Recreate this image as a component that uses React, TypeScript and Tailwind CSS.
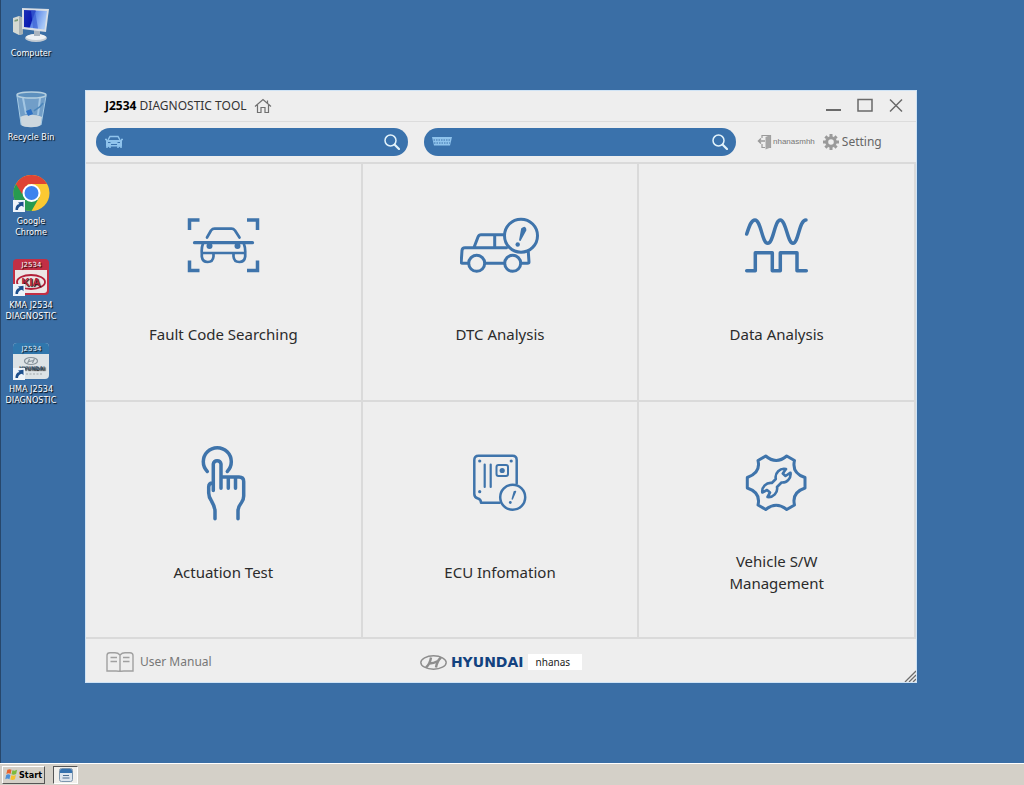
import type { ReactNode } from "react";

const LINE = "#3f74ab";

function Shortcut() {
  return (
    <g>
      <rect x="1" y="26" width="12" height="12" fill="#eef4fa" />
      <path d="M3.500 36c0-4 1.500-5.500 4-6L6 28.500l5.500-.8v5.500l-1.500-1.500c-2.500.6-4 2-4 4.300z" fill="#1d4f8c" />
    </g>
  );
}

function ComputerIcon() {
  return (
    <svg viewBox="0 0 38 38" className="h-[38px] w-[38px]" aria-hidden="true">
      <defs>
        <linearGradient id="screen" x1="0" x2="1" y1="0" y2="0.3">
          <stop offset="0" stopColor="#1a2fb8" />
          <stop offset="0.45" stopColor="#0a18b0" />
          <stop offset="0.5" stopColor="#5b86e8" />
          <stop offset="1" stopColor="#a8c8f6" />
        </linearGradient>
      </defs>
      <path d="M1 12l6-2 4 2v16l-4 1-6-3z" fill="#d5d9d3" />
      <path d="M7 10l4 2v16l-4 1z" fill="#a9b2b4" />
      <path d="M2.500 14l3.500-1v2l-3.500.8z" fill="#7d9c7c" />
      <ellipse cx="24" cy="32" rx="11" ry="4" fill="#c3cbd3" />
      <ellipse cx="24" cy="31" rx="10" ry="3" fill="#eef1f4" />
      <path d="M22 24h6v6h-6z" fill="#aab4bf" />
      <path d="M10 2l27 1-3 23-24-3z" fill="#d9dee4" />
      <path d="M12 4l23 1-2.500 18.500L12 21z" fill="url(#screen)" />
      <path d="M19 4.300l4 .2 3 18-5-.6z" fill="#3c62d4" opacity=".7" />
    </svg>
  );
}

function RecycleIcon() {
  return (
    <svg viewBox="0 0 38 38" className="h-[38px] w-[38px]" aria-hidden="true">
      <path d="M5 5l4 30c3 3 17 3 20 0L34 5z" fill="#8fb8da" opacity=".65" />
      <path d="M8 27l1.200 8c3 3 16.600 3 19.600 0L30 27c-6-3-16-3-22 0z" fill="#d7dde0" opacity=".9" />
      <path d="M11 8l3 16M28 8l-2 17" stroke="#b9d8ef" strokeWidth="2" opacity=".7" />
      <path d="M31 13c-3 5-7 6-9 8" stroke="#4c86bb" strokeWidth="1.500" fill="none" />
      <path d="M14 21l5-2 2 5-5 2z" fill="#2f71c4" />
      <ellipse cx="19.500" cy="5" rx="14.500" ry="3" fill="#5d90be" stroke="#b5cfdf" strokeWidth="1.500" />
      <path d="M5 6l4.200 29M34 6l-5 29" stroke="#a5cbe5" strokeWidth="1" />
    </svg>
  );
}

function ChromeLogo() {
  return (
    <svg viewBox="0 0 38 38" className="h-[38px] w-[38px]" aria-hidden="true">
      <circle cx="19.500" cy="19" r="18" fill="#fbc932" />
      <path d="M3.900 10a18 18 0 0 0 15.600 27l8-14-8-4z" fill="#279b50" />
      <path d="M3.900 10L10 20l6-10h19.100a18 18 0 0 0-31.200 0z" fill="#de4334" />
      <circle cx="19.500" cy="19" r="9" fill="#fff" />
      <circle cx="19.500" cy="19" r="7" fill="#3c83ee" />
      <Shortcut />
    </svg>
  );
}

function KiaIcon() {
  return (
    <svg viewBox="0 0 38 38" className="h-[38px] w-[38px]" aria-hidden="true">
      <rect x="1" y="1" width="36" height="36" rx="4" fill="#c22f45" />
      <path d="M3 12H35V32Q35 35 32 35H6Q3 35 3 32Z" fill="#ece6e6" />
      <text x="19.500" y="9" textAnchor="middle" fontSize="7" fill="#fff" className="font-['DejaVu_Sans']">J2534</text>
      <ellipse cx="19" cy="24" rx="14" ry="7" fill="none" stroke="#b3203a" strokeWidth="1.800" />
      <text x="19" y="28" textAnchor="middle" fontSize="11" fontWeight="bold" fill="#b3203a" className="font-['Liberation_Sans']">KIA</text>
      <Shortcut />
    </svg>
  );
}

function HyundaiIcon() {
  return (
    <svg viewBox="0 0 38 38" className="h-[38px] w-[38px]" aria-hidden="true">
      <rect x="1" y="1" width="36" height="36" rx="4" fill="#dde3e6" />
      <path d="M1 12V5a4 4 0 0 1 4-4h28a4 4 0 0 1 4 4v7z" fill="#3077ad" />
      <text x="19.500" y="9" textAnchor="middle" fontSize="7" fill="#e7f3fb" className="font-['DejaVu_Sans']">J2534</text>
      <ellipse cx="19" cy="19" rx="6.500" ry="3.500" fill="none" stroke="#87939b" strokeWidth="1.200" />
      <path d="M15.500 21.500l2-4.500M20.500 21l2-4.500M17 19.500l4.500-1" stroke="#87939b" strokeWidth="1.200" />
      <text x="20" y="28" textAnchor="middle" fontSize="5" fontWeight="bold" fill="#3b566d" className="font-['DejaVu_Sans']">HYUNDAI</text>
      <path d="M14 32h17" stroke="#b4bcc0" strokeWidth="1.500" strokeDasharray="2 1.500" />
      <Shortcut />
    </svg>
  );
}

const shortcuts: { label: string[]; icon: ReactNode }[] = [
  { label: ["Computer"], icon: <ComputerIcon /> },
  { label: ["Recycle Bin"], icon: <RecycleIcon /> },
  { label: ["Google", "Chrome"], icon: <ChromeLogo /> },
  { label: ["KMA J2534", "DIAGNOSTIC"], icon: <KiaIcon /> },
  { label: ["HMA J2534", "DIAGNOSTIC"], icon: <HyundaiIcon /> },
];

function TileIcon({ children, width = 3.5 }: { children: ReactNode; width?: number }) {
  return (
    <svg viewBox="0 0 80 80" className="h-20 w-20" fill="none" stroke={LINE} strokeWidth={width} strokeLinecap="round" strokeLinejoin="round" aria-hidden="true">
      {children}
    </svg>
  );
}

const tiles: { label: string[]; icon: ReactNode }[] = [
  {
    label: ["Fault Code Searching"],
    icon: (
      <TileIcon width={2.7}>
        <path d="M6.500 25V15H16.500M64 15H74.500V25M6.500 55.500V65.500H16.500M64 65.500H74.500V55.500" strokeWidth="3.500" strokeLinecap="butt" strokeLinejoin="miter" />
        <path d="M11.500 37.700H69.500" strokeWidth="3.200" />
        <path d="M24 32.500L28 25.500Q29.500 23.700 31.500 23.700H48.500Q50.500 23.700 52 25.500L56.500 32.500" />
        <path d="M20 38.500Q18.300 43 18.800 48V51.500Q19.500 57 24.700 57Q30 57 30.500 51.500V48H50.500V51.500Q51 57 56.300 57Q61.500 57 62.200 51.500V48Q62.500 43 60.800 38.500M19 48H62" />
        <circle cx="26.500" cy="41" r="3" fill={LINE} stroke="none" />
        <circle cx="54.500" cy="41" r="3" fill={LINE} stroke="none" />
      </TileIcon>
    ),
  },
  {
    label: ["DTC Analysis"],
    icon: (
      <TileIcon width={3}>
        <path d="M8 58.300H2.500Q1.200 58.300 1.200 57L2 45.500Q2.300 42.700 5 42.700H46.500M14 42.500L18 32Q19 29.700 21 29.700H43.500M34.700 30V42.500M25.300 58.300H44M61.300 58.300H67.500Q69 58.300 69 57L68.300 47" />
        <circle cx="16.700" cy="58.300" r="8" />
        <circle cx="52.700" cy="58.300" r="8" />
        <circle cx="61" cy="30.700" r="16.500" />
        <path d="M62 24Q65.500 21 65.500 25L60 35Z" fill={LINE} strokeWidth="1.800" />
        <circle cx="57.700" cy="39.500" r="2.200" fill={LINE} stroke="none" />
      </TileIcon>
    ),
  },
  {
    label: ["Data Analysis"],
    icon: (
      <TileIcon>
        <path d="M9.700 29C12 22 14 15 18 15C24 15 25 38.300 30.700 38.300C36.500 38.300 37.500 15 43.300 15C49 15 50.500 38.300 56 38.300C61.500 38.300 62 15 69 15" />
        <path d="M9.700 65.700H18.300V47.700H35.300V65.700H43.300V47.700H60V65.700H69.300" />
      </TileIcon>
    ),
  },
  {
    label: ["Actuation Test"],
    icon: (
      <TileIcon>
        <path d="M24.300 28.500A14 14 0 1 1 44.300 28.500" />
        <path d="M30.300 47.500V21A3.900 3.900 0 0 1 38 21V45.300M38 34H56Q60.700 34 60.700 38.500V53Q60.700 56.500 58.500 59.500Q55 64 55 68V75.700M45.300 34V45.300M52.500 34V45.300M29.500 40Q25.700 40 25.700 44V50Q25.700 54 28.500 58Q32 64 32 68V75.700" />
      </TileIcon>
    ),
  },
  {
    label: ["ECU Infomation"],
    icon: (
      <TileIcon width={2.5}>
        <path d="M56.700 40.500V17Q56.700 12.700 52.500 12.700H18.500Q14.300 12.700 14.300 17V51Q14.300 54.500 18 55.500Q21 56.500 21 59.700H39.500" />
        <path d="M24.700 21.500V44M30.700 21.500V44" strokeWidth="2.200" />
        <rect x="36.500" y="22" width="11.500" height="11" rx="2" strokeWidth="2" />
        <circle cx="42.200" cy="27.500" r="2.600" fill={LINE} stroke="none" />
        <circle cx="19.700" cy="18" r="1.600" fill={LINE} stroke="none" />
        <circle cx="51.200" cy="18" r="1.600" fill={LINE} stroke="none" />
        <circle cx="19.700" cy="48.700" r="1.600" fill={LINE} stroke="none" />
        <circle cx="52.700" cy="54.300" r="12.500" />
        <path d="M54.300 48.700L55.500 48.500L52.300 56Z" fill={LINE} strokeWidth="1.500" />
        <circle cx="50.300" cy="59.500" r="1.400" fill={LINE} stroke="none" />
      </TileIcon>
    ),
  },
  {
    label: ["Vehicle S/W", "Management"],
    icon: (
      <TileIcon width={3}>
        <path d="M28.700 13Q39.200 22 49.700 13L57.500 17.500Q54.500 30 68 34.500V45Q54.500 49.500 57.500 62L49.700 66.500Q39.200 58 28.700 66.500L21 62Q24 49.500 10.300 45V34.500Q24 30 21 17.500Z" />
        <path d="M49 26A8.500 8.500 0 0 0 38.800 36L34.800 40A8.500 8.500 0 0 0 25.300 49.500L30 47L33 49.500L30.500 54A8.500 8.500 0 0 0 40 44L44.500 39.500A8.500 8.500 0 0 0 53.500 29.700L48.500 33L45.800 30.500Z" strokeWidth="2.600" />
      </TileIcon>
    ),
  },
];

function SearchBox({ label, children }: { label: string; children: ReactNode }) {
  return (
    <form className="flex h-7 min-w-0 flex-1 items-center rounded-full bg-[#3a72ac] px-2" onSubmit={(e) => e.preventDefault()}>
      {children}
      <input type="search" aria-label={label} className="h-full min-w-0 flex-1 bg-transparent px-2 text-sm text-white outline-none" />
      <button type="submit" aria-label="Search" className="flex h-4 w-4 items-center justify-center">
        <svg viewBox="0 0 16 16" className="h-4 w-4" fill="none" stroke="#e2f3fb" aria-hidden="true">
          <circle cx="6.500" cy="6.500" r="5.500" strokeWidth="1.500" />
          <path d="M10.700 10.700L15 15" strokeWidth="2.200" strokeLinecap="round" />
        </svg>
      </button>
    </form>
  );
}

export default function App() {
  return (
    <div className="flex min-h-screen flex-col bg-[#3a6ea5] font-['Noto_Sans',sans-serif]">
      <div className="flex flex-1">
        <nav aria-label="Desktop" className="flex w-[61px] shrink-0 flex-col border-l border-[#27476b] pt-[6px]">
          {shortcuts.map((s) => (
            <button key={s.label.join(" ")} type="button" className="flex h-[84px] flex-col items-center gap-1 text-center font-['DejaVu_Sans_Condensed','DejaVu_Sans',sans-serif] text-[9px] leading-[11px] whitespace-nowrap text-white [text-shadow:1px_1px_1px_#000]">
              {s.icon}
              <span>
                {s.label.map((l) => (
                  <span key={l} className="block">{l}</span>
                ))}
              </span>
            </button>
          ))}
        </nav>

        <main className="flex flex-1 pt-[90px] pr-[107px] pb-20 pl-6">
          <section aria-label="J2534 Diagnostic Tool" className="relative flex flex-1 flex-col border border-[#cfe3f5] bg-[#eeeeee]">
            <header className="flex h-[31px] items-center justify-between border-b border-[#dcdcdc] pr-3 pl-[19px]">
              <h1 className="flex items-center text-xs text-[#333]">
                <span>
                  <b className="text-black">J2534</b> DIAGNOSTIC TOOL
                </span>
                <button type="button" aria-label="Home" className="ml-[7px]">
                  <svg viewBox="0 0 18 16" className="h-4 w-[18px]" fill="none" stroke="#707070" strokeWidth="1.200" aria-hidden="true">
                    <path d="M1 8.500L9 1.500L17 8.500M3.500 7V14.500H7V9.500H11V14.500H14.500V7M13.500 5V2.500" />
                  </svg>
                </button>
              </h1>
              <div className="flex items-center gap-[15px] text-[#6a6a6a]">
                <button type="button" aria-label="Minimize">
                  <svg viewBox="0 0 16 16" className="h-4 w-4" stroke="currentColor" strokeWidth="2"><path d="M0 12H15" /></svg>
                </button>
                <button type="button" aria-label="Maximize">
                  <svg viewBox="0 0 16 16" className="h-4 w-4" fill="none" stroke="currentColor" strokeWidth="1.500"><path d="M1 1.500H15V13H1Z" /></svg>
                </button>
                <button type="button" aria-label="Close">
                  <svg viewBox="0 0 16 16" className="h-4 w-4" stroke="currentColor" strokeWidth="1.500"><path d="M2 1.500L14 13.500M14 1.500L2 13.500" /></svg>
                </button>
              </div>
            </header>

            <div className="flex h-[42px] items-center border-b-2 border-[#dadada] pl-[10px]">
              <div className="flex flex-1 gap-4">
                <SearchBox label="Vehicle">
                  <svg viewBox="0 0 20 14" className="h-[14px] w-5" fill="none" stroke="#8fc3ec" strokeWidth="1.500" aria-hidden="true">
                    <path d="M4 5L6 1.500H14L16 5M1 4.500H3M17 4.500H19M3 13V11H6V13M14 13V11H17V13" />
                    <path d="M2 5H18V11.500H2Z" fill="#8fc3ec" stroke="none" />
                    <path d="M7 9.500H13M4 7.500H6.500M13.500 7.500H16" stroke="#3a72ac" strokeWidth="1" />
                  </svg>
                </SearchBox>
                <SearchBox label="Module">
                  <svg viewBox="0 0 20 10" className="h-[10px] w-5" fill="#8fc3ec" aria-hidden="true">
                    <path d="M0 0H20L18 8.500H2Z" />
                    <path d="M1.500 3H19M2 6H18" stroke="#3a72ac" strokeWidth="1" strokeDasharray="1.500 1" />
                  </svg>
                </SearchBox>
              </div>
              <div className="ml-[21px] flex w-[159px] shrink-0 items-center text-[#777]">
                <button type="button" className="flex items-center gap-px font-['Liberation_Sans',sans-serif] text-[8px] leading-4">
                  <svg viewBox="0 0 15 16" className="h-4 w-[15px]" fill="none" stroke="#9a9a9a" strokeWidth="1.200" aria-hidden="true">
                    <path d="M5 4V1.500H13.500V13.500H10M5 10V13.500H8" />
                    <path d="M8.500 3L13.500 1V13.500L8.500 15.500Z" fill="#a5a5a5" stroke="none" />
                    <path d="M8 7H2M4 4.500L1.500 7L4 9.500" strokeWidth="1.500" />
                  </svg>
                  nhanasmhh
                </button>
                <button type="button" className="ml-2 flex items-center gap-[3px] text-xs leading-4 text-[#666]">
                  <svg viewBox="-8 -8 16 16" className="h-4 w-4" fill="none" stroke="#9a9a9a" aria-hidden="true">
                    <circle r="4.300" strokeWidth="3" />
                    <path d="M0-8V-5M0 5V8M-8 0H-5M5 0H8M-5.600-5.600L-3.700-3.700M3.700 3.700L5.600 5.600M-5.600 5.600L-3.700 3.700M3.700-3.700L5.600-5.600" strokeWidth="3" />
                  </svg>
                  Setting
                </button>
              </div>
            </div>

            <div className="grid flex-1 auto-rows-fr grid-cols-3">
              {tiles.map((t) => (
                <button key={t.label.join(" ")} type="button" className="flex flex-col items-center border-r-2 border-b-2 border-[#dadada] px-4 pt-[41px] text-[15px] leading-[22px] text-[#2b2b2b]">
                  {t.icon}
                  <span className="mt-[27px] flex min-h-11 flex-col justify-center">
                    {t.label.map((l) => (
                      <span key={l}>{l}</span>
                    ))}
                  </span>
                </button>
              ))}
            </div>

            <footer className="grid h-[43px] grid-cols-[1fr_auto_1fr] items-center px-5 pt-[3px]">
              <a href="#manual" className="flex items-center gap-[6px] text-xs text-[#777]">
                <svg viewBox="0 0 28 20" className="h-5 w-7" fill="none" stroke="#a0a0a0" strokeWidth="1.400" aria-hidden="true">
                  <path d="M14 3Q12 .8 9 .8H4Q1 .8 1 3.500V19H10Q13 19 14 19.500Q15 19 18 19H27V3.500Q27 .8 24 .8H19Q16 .8 14 3V19M4.500 5.500H11M4.500 9.500H11M17 5.500H23.500M17 9.500H23.500" />
                </svg>
                User Manual
              </a>
              <div className="flex items-center">
                <svg viewBox="0 0 27 15" className="h-[15px] w-[27px]" fill="none" stroke="#8d8d8d" aria-hidden="true">
                  <ellipse cx="13.500" cy="7.500" rx="12.700" ry="6.700" strokeWidth="1.400" />
                  <path d="M6 12.500Q10 9 11 2.500M16 12.500Q17 6 21 2.500M9.500 8.500Q13.500 8.500 18 6" strokeWidth="2.400" />
                </svg>
                <span className="ml-1 font-['DejaVu_Sans',sans-serif] text-sm leading-4 font-bold text-[#12427f]">HYUNDAI</span>
                <span className="ml-1 bg-white pr-3 pl-2 text-[10px] leading-4 text-[#222]">nhanas</span>
              </div>
            </footer>
            <svg viewBox="0 0 12 12" className="absolute right-0 bottom-0 h-3 w-3" stroke="#6d6d6d" strokeWidth="1.300" aria-hidden="true">
              <path d="M1 12L12 1M5 12L12 5M9 12L12 9" />
            </svg>
          </section>
        </main>
      </div>

      <footer className="flex h-[22px] items-center gap-2 border-t border-white bg-[#d4d0c8] pl-0.5">
        <button type="button" className="flex h-[18px] items-center gap-px border border-t-white border-r-[#555] border-b-[#555] border-l-white px-0.5 font-['DejaVu_Sans_Condensed','DejaVu_Sans',sans-serif] text-[9px] leading-3 font-bold text-black">
          <svg viewBox="0 0 14 14" className="h-[13px] w-[13px]" aria-hidden="true">
            <path d="M2.500 2Q5 .5 7 2L6 6.500Q4 5 1.500 6.500Z" fill="#e8622c" />
            <path d="M8 2.300Q10.500 3.500 13 2L12 6.500Q9.500 8 7 6.800Z" fill="#7dba3c" />
            <path d="M1.300 7.500Q3.500 6 5.800 7.500L4.800 12Q2.500 10.500 .3 12Z" fill="#4a8fd8" />
            <path d="M6.800 7.800Q9.300 9 11.700 7.500L10.700 12Q8.300 13.500 5.800 12.300Z" fill="#f4c12e" />
          </svg>
          Start
        </button>
        <button type="button" aria-label="J2534 Diagnostic" className="flex h-[18px] w-[25px] items-center justify-center border border-t-[#555] border-r-white border-b-white border-l-[#555] bg-[#f1efeb]">
          <svg viewBox="0 0 14 14" className="h-[14px] w-[14px]" aria-hidden="true">
            <rect x=".5" y=".5" width="13" height="13" rx="2" fill="#dce5ee" stroke="#7c95ad" />
            <path d="M1 5V2.500Q1 1 2.500 1H11.500Q13 1 13 2.500V5Z" fill="#3471ae" />
            <path d="M4 7.500H10M3.500 10H10.500" stroke="#4c6f92" />
          </svg>
        </button>
      </footer>
    </div>
  );
}
